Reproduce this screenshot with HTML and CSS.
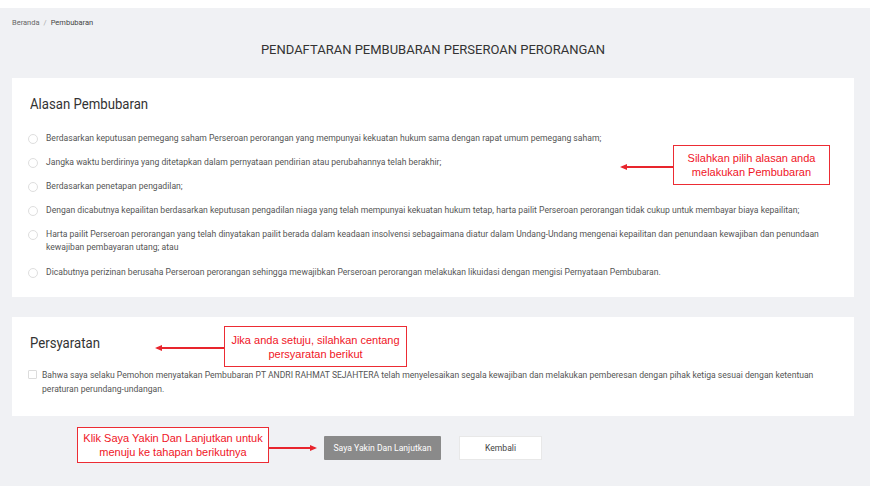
FILE: index.html
```html
<!DOCTYPE html>
<html lang="id">
<head>
<meta charset="utf-8">
<title>Pendaftaran Pembubaran</title>
<link rel="stylesheet" href="styles.css">
</head>
<body>
<div class="page">
  <div class="breadcrumb"><span>Beranda</span><span class="sep">/</span><span class="current">Pembubaran</span></div>
  <h1 class="title">PENDAFTARAN PEMBUBARAN PERSEROAN PERORANGAN</h1>

  <section class="card card-reasons">
    <h2 class="card-title">Alasan Pembubaran</h2>
    <ul class="options">
      <li class="option"><span class="radio"></span><span class="opt-text">Berdasarkan keputusan pemegang saham Perseroan perorangan yang mempunyai kekuatan hukum sama dengan rapat umum pemegang saham;</span></li>
      <li class="option"><span class="radio"></span><span class="opt-text">Jangka waktu berdirinya yang ditetapkan dalam pernyataan pendirian atau perubahannya telah berakhir;</span></li>
      <li class="option"><span class="radio"></span><span class="opt-text">Berdasarkan penetapan pengadilan;</span></li>
      <li class="option"><span class="radio"></span><span class="opt-text">Dengan dicabutnya kepailitan berdasarkan keputusan pengadilan niaga yang telah mempunyai kekuatan hukum tetap, harta pailit Perseroan perorangan tidak cukup untuk membayar biaya kepailitan;</span></li>
      <li class="option"><span class="radio"></span><span class="opt-text">Harta pailit Perseroan perorangan yang telah dinyatakan pailit berada dalam keadaan insolvensi sebagaimana diatur dalam Undang-Undang mengenai kepailitan dan penundaan kewajiban dan penundaan kewajiban pembayaran utang; atau</span></li>
      <li class="option"><span class="radio"></span><span class="opt-text">Dicabutnya perizinan berusaha Perseroan perorangan sehingga mewajibkan Perseroan perorangan melakukan likuidasi dengan mengisi Pernyataan Pembubaran.</span></li>
    </ul>
  </section>

  <section class="card card-terms">
    <h2 class="card-title">Persyaratan</h2>
    <div class="check-row"><span class="checkbox"></span><span class="check-text">Bahwa saya selaku Pemohon menyatakan Pembubaran PT ANDRI RAHMAT SEJAHTERA telah menyelesaikan segala kewajiban dan melakukan pemberesan dengan pihak ketiga sesuai dengan ketentuan peraturan perundang-undangan.</span></div>
  </section>

  <div class="actions">
    <button class="btn btn-primary">Saya Yakin Dan Lanjutkan</button>
    <button class="btn btn-secondary">Kembali</button>
  </div>
</div>

<div class="note note-1">Silahkan pilih alasan anda<br>melakukan Pembubaran</div>
<div class="arrow arrow-left arrow-1"></div>
<div class="note note-2">Jika anda setuju, silahkan centang<br>persyaratan berikut</div>
<div class="arrow arrow-left arrow-2"></div>
<div class="note note-3">Klik Saya Yakin Dan Lanjutkan untuk<br>menuju ke tahapan berikutnya</div>
<div class="arrow arrow-right arrow-3"></div>
</body>
</html>
```

FILE: styles.css
```css
* { box-sizing: border-box; }
html, body { margin: 0; padding: 0; }
body {
  position: relative;
  width: 870px;
  height: 486px;
  overflow: hidden;
  background: #ffffff;
  font-family: Roboto, "Liberation Sans", sans-serif;
  color: #555;
}
.page {
  margin-top: 8px;
  height: 478px;
  background: #f0f1f4;
  padding: 10px 16px 0 12px;
  display: flex;
  flex-direction: column;
}
.breadcrumb {
  font-size: 7.5px;
  color: #666;
  line-height: 10px;
  display: flex;
  gap: 4px;
}
.breadcrumb .sep { color: #aaa; }
.breadcrumb .current { color: #444; }
.title {
  margin: 14px 0 0;
  text-align: center;
  font-weight: 400;
  font-size: 13px;
  line-height: 16px;
  color: #333;
}
.card {
  background: #fff;
  padding: 0 18px;
}
.card-reasons {
  margin-top: 20px;
  height: 219px;
  padding-top: 17px;
}
.card-title {
  margin: 0;
  font-weight: 400;
  font-size: 15.5px;
  line-height: 18px;
  color: #333;
  transform: scaleX(0.85);
  transform-origin: left center;
}
.options {
  list-style: none;
  margin: 19px 0 0;
  padding: 0;
  display: flex;
  flex-direction: column;
  gap: 11px;
}
.option {
  display: flex;
  align-items: flex-start;
  gap: 8px;
  font-size: 8.6px;
  line-height: 13px;
  color: #555;
}
.option:last-child { margin-top: 1px; }
.radio {
  flex: none;
  width: 10px;
  height: 10px;
  margin-top: 1.5px;
  margin-left: -2px;
  border: 1px solid #dedede;
  border-radius: 50%;
  background: #fff;
}
.opt-text { flex: 1; }
.card-terms {
  margin-top: 20px;
  height: 99px;
  padding-top: 17px;
}
.check-row {
  margin-top: 16px;
  display: flex;
  align-items: flex-start;
  gap: 5px;
  font-size: 8.6px;
  line-height: 14px;
  color: #555;
  padding-right: 20px;
}
.checkbox {
  flex: none;
  width: 9px;
  height: 9px;
  margin-top: 2px;
  margin-left: -2px;
  border: 1px solid #dcdcdc;
  border-radius: 1px;
  background: #fff;
}
.actions {
  margin-top: 20px;
  display: flex;
  gap: 18px;
  padding-left: 312px;
}
.btn {
  font-family: Roboto, "Liberation Sans", sans-serif;
  font-size: 8.6px;
  height: 24px;
  border: none;
  padding: 0;
}
.btn-primary {
  width: 117px;
  background: #8a8a8a;
  color: #fff;
  border-radius: 1px;
}
.btn-secondary {
  width: 83px;
  background: #fff;
  color: #444;
  border: 1px solid #e8e8e8;
}

/* annotation overlays */
.note {
  position: absolute;
  border: 1.5px solid #ec2c34;
  background: #fff;
  color: #f0151f;
  font-family: "Liberation Sans", Arial, sans-serif;
  font-size: 11px;
  line-height: 14px;
  text-align: center;
  display: flex;
  align-items: center;
  justify-content: center;
}
.note-1 { left: 673px; top: 145px; width: 157px; height: 40px; }
.note-2 { left: 224px; top: 326px; width: 183px; height: 41px; }
.note-3 { left: 77px; top: 427px; width: 192px; height: 36px; }
.arrow {
  position: absolute;
  height: 1.5px;
  background: #e8252d;
}
.arrow::after {
  content: "";
  position: absolute;
  top: -2.5px;
  border-top: 3.25px solid transparent;
  border-bottom: 3.25px solid transparent;
}
.arrow-left::after { left: -2px; border-right: 7px solid #e8252d; }
.arrow-right::after { right: -2px; border-left: 7px solid #e8252d; }
.arrow-1 { left: 622px; top: 166px; width: 51px; }
.arrow-2 { left: 157px; top: 347px; width: 67px; }
.arrow-3 { left: 269px; top: 447px; width: 46px; }
```
